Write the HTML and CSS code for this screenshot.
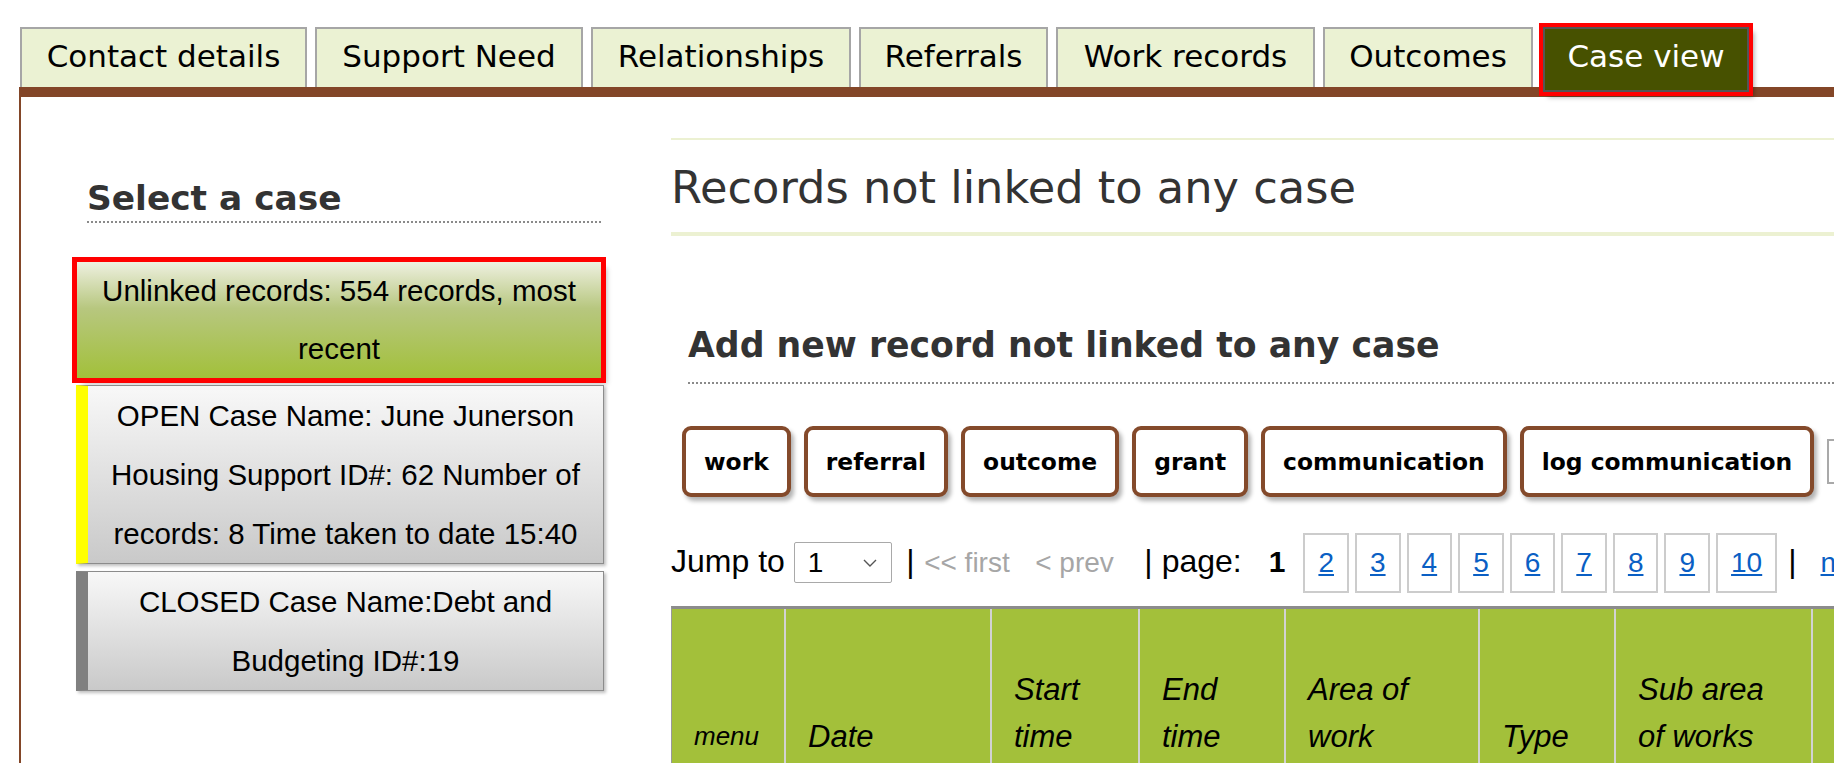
FILE: index.html
```html
<!DOCTYPE html>
<html lang="en">
<head>
<meta charset="utf-8">
<title>Case view</title>
<link rel="stylesheet" href="styles.css">
</head>
<body>
<div class="page">
  <nav class="tabs">
    <div class="tab tab-contact">Contact details</div>
    <div class="tab tab-support">Support Need</div>
    <div class="tab tab-rel">Relationships</div>
    <div class="tab tab-ref">Referrals</div>
    <div class="tab tab-work">Work records</div>
    <div class="tab tab-out">Outcomes</div>
    <div class="tab tab-active">Case view</div>
  </nav>
  <main class="panel">
    <aside class="cases">
      <h2 class="cases-title">Select a case</h2>
      <div class="case case-unlinked">Unlinked records: 554 records, most recent</div>
      <div class="case case-open">OPEN Case Name: June Junerson Housing Support ID#: 62 Number of records: 8 Time taken to date 15:40</div>
      <div class="case case-closed">CLOSED Case Name:Debt and Budgeting ID#:19</div>
    </aside>
    <section class="records">
      <h1 class="records-title">Records not linked to any case</h1>
      <h2 class="add-title">Add new record not linked to any case</h2>
      <div class="btn-row">
        <span class="btn">work</span>
        <span class="btn">referral</span>
        <span class="btn">outcome</span>
        <span class="btn">grant</span>
        <span class="btn">communication</span>
        <span class="btn">log communication</span>
        <span class="btn-plain">print</span>
      </div>
      <div class="pager">
        <span class="pg-label">Jump to</span>
        <span class="jump"><span class="jump-val">1</span><svg class="chev" width="14" height="9" viewBox="0 0 14 9"><polyline points="1,1 7,7 13,1" fill="none" stroke="#555" stroke-width="1.4"/></svg></span>
        <span class="sep sep-1">|</span>
        <span class="pg-off pg-first">&lt;&lt; first</span>
        <span class="pg-off pg-prev">&lt; prev</span>
        <span class="sep sep-2">|</span>
        <span class="pg-label pg-page">page:</span>
        <b class="pg-cur">1</b>
        <a class="pg pg-start" href="#">2</a>
        <a class="pg" href="#">3</a>
        <a class="pg" href="#">4</a>
        <a class="pg" href="#">5</a>
        <a class="pg" href="#">6</a>
        <a class="pg" href="#">7</a>
        <a class="pg" href="#">8</a>
        <a class="pg" href="#">9</a>
        <a class="pg" href="#">10</a>
        <span class="sep sep-3">|</span>
        <a class="pg-next" href="#">next &gt;</a>
      </div>
      <table class="grid">
        <thead>
          <tr>
            <th class="c-menu">menu</th>
            <th class="c-date">Date</th>
            <th class="c-start">Start time</th>
            <th class="c-end">End time</th>
            <th class="c-area">Area of work</th>
            <th class="c-type">Type</th>
            <th class="c-sub">Sub area of works</th>
            <th class="c-more">Time taken</th>
          </tr>
        </thead>
      </table>
    </section>
  </main>
</div>
</body>
</html>
```
FILE: styles.css
```css
html, body {
  margin: 0;
  padding: 0;
  overflow: hidden;
  background: #fff;
}
body {
  width: 1834px;
  height: 763px;
  font-family: "Liberation Sans", Arial, sans-serif;
  color: #000;
}
.page {
  padding: 27px 0 0 19px;
}

/* Tabs */
.tabs {
  display: flex;
  align-items: flex-start;
  gap: 8px;
  height: 60px;
  margin-left: 1px;
  font-family: "DejaVu Sans", Verdana, sans-serif;
  font-size: 31px;
}
.tab {
  flex: none;
  box-sizing: border-box;
  height: 60px;
  border: 2px solid #a6a6a6;
  border-bottom: 0;
  background: #ebf2d3;
  color: #000;
  text-align: center;
  line-height: 54px;
  padding-bottom: 4px;
  white-space: nowrap;
}
.tab-contact { width: 287px; }
.tab-support { width: 268px; }
.tab-rel { width: 260px; }
.tab-ref { width: 189px; }
.tab-work { width: 259px; }
.tab-out { width: 210px; }
.tab-active {
  position: relative;
  z-index: 2;
  width: 206px;
  height: 65px;
  margin-left: 2px;
  background: #475100;
  color: #fff;
  border: 2px solid #555;
  padding-bottom: 7px;
  outline: 4px solid #ff0000;
  box-shadow: 5px 5px 5px rgba(0, 0, 0, 0.35);
}

/* Panel */
.panel {
  display: flex;
  align-items: flex-start;
  border-top: 10px solid #834628;
  border-left: 2px solid #834628;
  height: 700px;
}

/* Left column */
.cases {
  flex: 0 0 528px;
  margin-left: 55px;
  padding-top: 81px;
}
.cases-title {
  margin: 0 3px 0 11px;
  font-family: "DejaVu Sans", Verdana, sans-serif;
  font-weight: bold;
  font-size: 34.4px;
  line-height: 40px;
  color: #333;
  padding-bottom: 3px;
  border-bottom: 2px dotted #8a8a8a;
}
.case {
  font-family: "Liberation Sans", Arial, sans-serif;
  font-size: 29.5px;
  line-height: 59px;
  text-align: center;
  margin-bottom: 7px;
  border: 1px solid #8c8c8c;
  background: linear-gradient(#f8f8f8, #c9c9c9);
  box-shadow: 2px 2px 3px rgba(0, 0, 0, 0.25);
}
.case-unlinked {
  margin: 38.5px 3px 7px 1px;
  border: 0;
  line-height: 58px;
  background: linear-gradient(#eef0e0 0%, #b7c77f 40%, #a2c03a 100%);
  outline: 5px solid #ff0000;
  box-shadow: 6px 6px 5px rgba(0, 0, 0, 0.25);
}
.case-open {
  border-left: 12px solid #ffff00;
}
.case-closed {
  border-left: 12px solid #808080;
}

/* Right column */
.records {
  flex: 1 1 auto;
  min-width: 0;
  margin-left: 67px;
  padding-top: 41px;
}
.records-title {
  margin: 0;
  font-family: "DejaVu Sans", Verdana, sans-serif;
  font-weight: normal;
  font-size: 44.7px;
  line-height: 51px;
  color: #333;
  border-top: 2px solid #ecf1d2;
  border-bottom: 4px solid #ecf1d2;
  padding: 23px 0 18px;
  white-space: nowrap;
}
.add-title {
  margin: 88.5px 0 0 17px;
  font-family: "DejaVu Sans", Verdana, sans-serif;
  font-weight: bold;
  font-size: 34.7px;
  line-height: 40px;
  color: #333;
  padding-bottom: 17.5px;
  border-bottom: 2px dotted #8a8a8a;
  white-space: nowrap;
}

/* Buttons */
.btn-row {
  display: flex;
  align-items: center;
  margin: 42px 0 0 11px;
  white-space: nowrap;
}
.btn {
  flex: none;
  font-family: "DejaVu Sans", Verdana, sans-serif;
  font-weight: bold;
  font-size: 23.4px;
  line-height: 27px;
  padding: 19px 18px 17px;
  border: 4px solid #844a2b;
  border-radius: 9px;
  background: #fff;
  color: #000;
  box-shadow: 3px 4px 4px rgba(0, 0, 0, 0.3);
  margin-right: 13px;
}
.btn-plain {
  flex: none;
  font-family: "DejaVu Sans", Verdana, sans-serif;
  font-size: 22px;
  line-height: 25px;
  padding: 8px 12px;
  border: 2px solid #a9a9a9;
  background: #fff;
}

/* Pager */
.pager {
  display: flex;
  align-items: baseline;
  margin-top: 36px;
  white-space: nowrap;
  font-family: "Liberation Sans", Arial, sans-serif;
}
.pager > * {
  flex: none;
}
.pg-label, .sep {
  font-size: 32px;
  color: #000;
}
.jump {
  display: inline-flex;
  align-items: center;
  box-sizing: border-box;
  width: 98px;
  height: 41px;
  margin-left: 9px;
  padding: 0 14px 0 13px;
  border: 1px solid #a9a9a9;
  border-radius: 2px;
  font-size: 28px;
  line-height: 39px;
}
.jump-val {
  flex: 1;
}
.chev {
  flex: none;
  margin-top: 2px;
}
.sep-1 { margin-left: 14.5px; }
.pg-off {
  font-size: 28px;
  color: #a6a6a6;
}
.pg-first { margin-left: 9.5px; }
.pg-prev { margin-left: 25.5px; }
.sep-2 { margin-left: 30.5px; }
.pg-page { margin-left: 9px; }
.pg-cur {
  font-size: 30px;
  font-weight: bold;
  margin-left: 27px;
}
.pg {
  box-sizing: border-box;
  min-width: 45px;
  padding: 0 13px;
  border: 2px solid #cccccc;
  font-size: 28px;
  line-height: 56px;
  text-align: center;
  color: #0a5fc4;
  text-decoration: underline;
  margin-right: 6px;
}
.pg-start { margin-left: 18px; }
.sep-3 { margin-left: 5px; }
.pg-next {
  margin-left: 24px;
  font-size: 28px;
  color: #0a5fc4;
  text-decoration: underline;
}

/* Table */
.grid {
  margin-top: 13px;
  table-layout: fixed;
  width: 1341px;
  border-collapse: separate;
  border-spacing: 0;
  border-top: 3px solid #8c8c8c;
  border-left: 1px solid #999;
}
.grid th {
  box-sizing: border-box;
  height: 163px;
  background: #a3c03a;
  font-family: "Liberation Sans", Arial, sans-serif;
  font-style: italic;
  font-weight: normal;
  font-size: 31px;
  line-height: 47px;
  text-align: left;
  vertical-align: bottom;
  padding: 0 24px 12px 22px;
  border-left: 2px solid #d2d2d2;
  color: #000;
}
.grid th.c-menu {
  width: 112px;
  border-left: 0;
  font-size: 26px;
  padding-right: 8px;
}
.c-date { width: 206px; }
.c-start { width: 148px; }
.c-end { width: 146px; }
.c-area { width: 194px; }
.c-type { width: 136px; }
.c-sub { width: 197px; }
.c-more { width: 202px; }
```
